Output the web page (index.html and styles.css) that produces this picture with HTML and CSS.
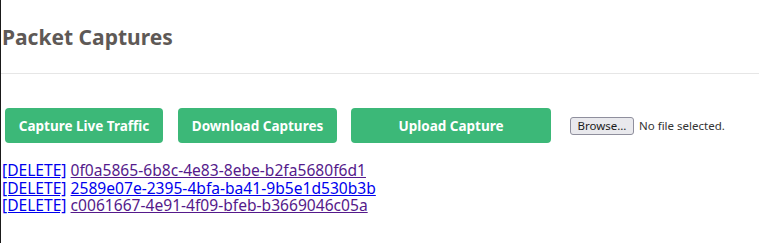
FILE: index.html
```html
<!DOCTYPE html>
<html lang="en">
  <head>
    <meta charset="UTF-8" />
    <meta name="viewport" content="width=device-width, initial-scale=1.0" />
    <title>Packet Captures</title>
    <link rel="stylesheet" href="styles.css">
  </head>
  <body>
    <div class="page">
      <header class="header">
        <h1 class="title">Packet Captures</h1>
      </header>
      <div class="actions">
        <button class="button live">Capture Live Traffic</button>
        <button class="button download">Download Captures</button>
        <button class="button upload">Upload Capture</button>
        <label class="file">
          <input type="file" />
          <span class="browse">Browse…</span>
          <span class="filename">No file selected.</span>
        </label>
      </div>
      <ul class="captures">
        <li><a href="#" class="delete">[DELETE]</a> <a href="#" class="visited">0f0a5865-6b8c-4e83-8ebe-b2fa5680f6d1</a></li>
        <li><a href="#" class="delete">[DELETE]</a> <a href="#" class="fresh">2589e07e-2395-4bfa-ba41-9b5e1d530b3b</a></li>
        <li><a href="#" class="delete">[DELETE]</a> <a href="#" class="visited">c0061667-4e91-4f09-bfeb-b3669046c05a</a></li>
      </ul>
    </div>
  </body>
</html>
```

FILE: styles.css
```css
body {
  margin: 0;
  background-color: white;
  font-family: "Noto Sans", sans-serif;
}
.page {
  min-height: 100vh;
  border-left: 1px solid #1a1a1a;
  box-sizing: border-box;
}
.header {
  height: 73px;
  border-bottom: 1px solid #e6e6e6;
  display: flex;
  align-items: center;
}
.title {
  margin: 0 0 0 1px;
  font-size: 21px;
  font-weight: bold;
  color: #5e5956;
}
.actions {
  display: flex;
  align-items: center;
  margin-top: 34px;
  padding-left: 4px;
}
.button {
  flex-shrink: 0;
  height: 35px;
  border: none;
  border-radius: 4px;
  background-color: #3cb878;
  color: white;
  font-family: "Noto Sans", sans-serif;
  font-size: 13.5px;
  font-weight: bold;
  margin-right: 15px;
  padding: 0;
}
.live {
  width: 158px;
}
.download {
  width: 159px;
  margin-right: 14px;
}
.upload {
  width: 200px;
  margin-right: 19px;
}
.file {
  display: flex;
  align-items: center;
  font-size: 11.5px;
  color: #2b2a33;
}
.file input {
  display: none;
}
.browse {
  box-sizing: border-box;
  width: 64px;
  height: 18px;
  line-height: 16px;
  text-align: center;
  border: 1px solid #8f8f9d;
  border-radius: 3px;
  background-color: #e9e9ed;
  color: #1b1b1b;
}
.filename {
  margin-left: 5px;
  color: #333;
}
.captures {
  margin: 19px 0 0 1px;
  padding: 0;
  list-style: none;
  font-size: 15.6px;
  line-height: 17.6px;
}
.captures li {
  height: 17.6px;
}
.captures a {
  display: inline-block;
  height: 17.6px;
  text-decoration: underline;
}
.delete,
.fresh {
  color: #0000ee;
}
.visited {
  color: #551a8b;
}
```
